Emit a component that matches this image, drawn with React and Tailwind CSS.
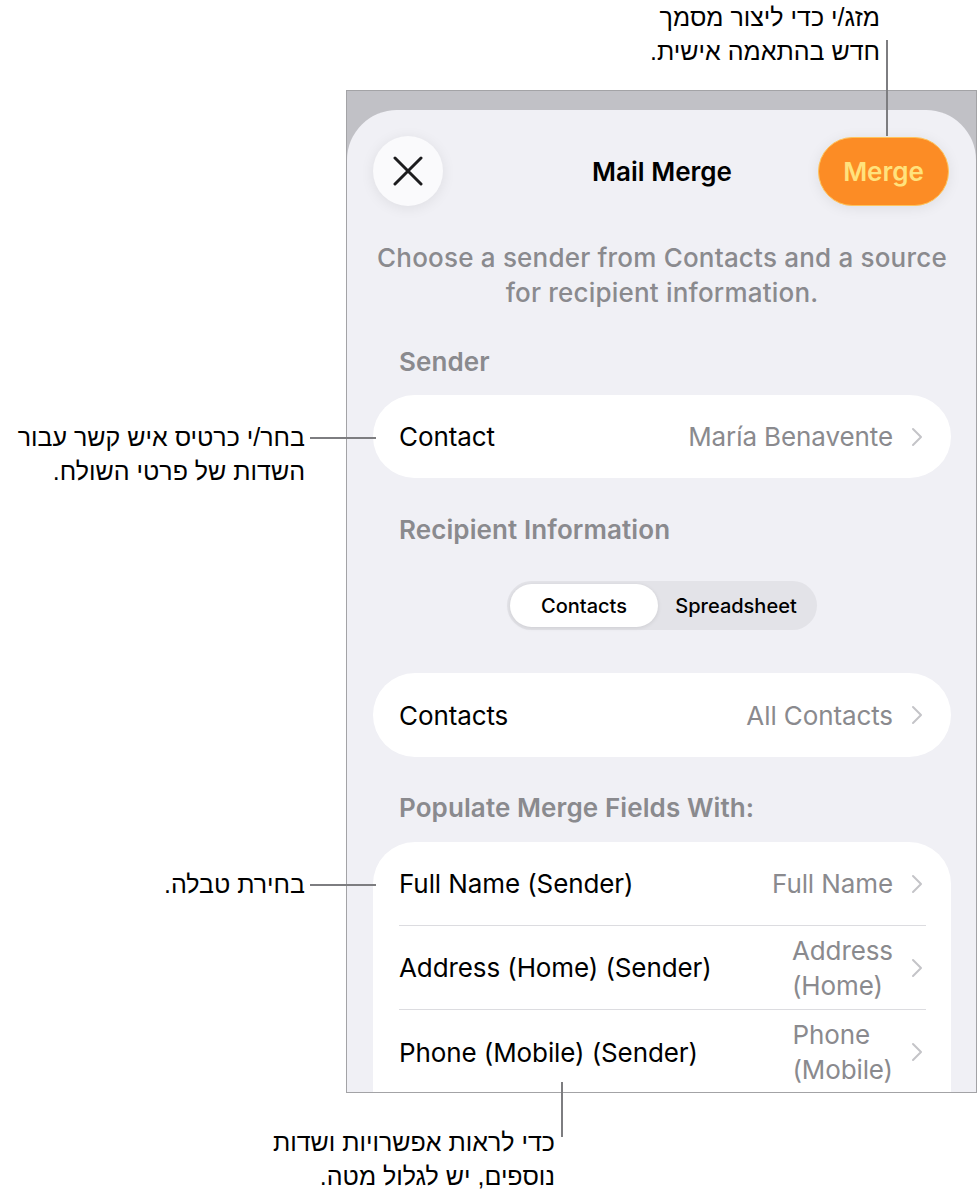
import React from 'react';

const ui = { fontFamily: 'Inter, Roboto, "Liberation Sans", sans-serif' };
const he = { fontFamily: '"Liberation Sans", "DejaVu Sans", sans-serif' };

const Chevron = () => (
  <svg width="12" height="20" viewBox="0 0 12 20" className="shrink-0">
    <path d="M2 2 L10 10 L2 18" fill="none" stroke="#c4c4c8" strokeWidth="2" strokeLinecap="round" strokeLinejoin="round" />
  </svg>
);

const Row = ({ label, value, divider }) => (
  <div className="h-[84px] flex flex-col">
    <div className="flex-1 flex items-center pl-[26px] pr-[28px]">
      <span className="text-[26px] text-black tracking-[-0.1px]">{label}</span>
      <div className="ml-auto flex items-center gap-[18px]">
        <div className="text-left text-[26px] leading-[35px] text-[#8a8a8e] tracking-[-0.1px]">
          {value.map((v) => (
            <div key={v}>{v}</div>
          ))}
        </div>
        <Chevron />
      </div>
    </div>
    {divider && <div className="ml-[26px] mr-[25px] h-px bg-[#dcdce0]" />}
  </div>
);

const SectionLabel = ({ children, className }) => (
  <div className={'pl-[26px] text-[26px] leading-[30px] font-semibold text-[#8a8a8e] tracking-[0.1px] ' + className}>
    {children}
  </div>
);

const Callout = ({ className, children }) => (
  <div className={'absolute text-[25px] leading-[34px] text-black text-right ' + className} dir="rtl" style={he}>
    {children}
  </div>
);

export default function App() {
  return (
    <div className="relative w-[977px] h-[1193px] bg-white overflow-hidden" style={ui}>
      {/* phone screenshot */}
      <div className="ml-[346px] mt-[90px] w-[631px] h-[1003px] border border-[#a3a3a6] bg-[#c1c1c6] overflow-hidden pt-[19px]">
        <div className="h-full bg-[#f0f0f5] rounded-t-[50px] pt-[26px] pl-[26px] pr-[25px]">
          <div className="h-[70px] grid grid-cols-[1fr_auto_1fr] items-center">
            <button className="w-[70px] h-[70px] rounded-full bg-[#fafafc] shadow-[0_2px_14px_rgba(0,0,0,0.08)] flex items-center justify-center">
              <svg width="30" height="30" viewBox="0 0 30 30">
                <path d="M2 2 L28 28 M28 2 L2 28" stroke="#1c1c1e" strokeWidth="3" strokeLinecap="round" />
              </svg>
            </button>
            <div className="text-[26px] font-semibold text-black">Mail Merge</div>
            <div className="flex justify-end">
              <button className="w-[131px] h-[69px] rounded-full bg-[#fc8c25] border border-[#ffc45a] shadow-[0_2px_14px_rgba(0,0,0,0.08)] text-[26px] font-semibold text-[#ffe27d] mr-[2px]">
                Merge
              </button>
            </div>
          </div>

          <div className="mt-[34px] text-center text-[26px] leading-[35px] font-medium text-[#8a8a8e] tracking-[0.2px]">
            Choose a sender from Contacts and a source
            <br />
            for recipient information.
          </div>

          <SectionLabel className="mt-[37px]">Sender</SectionLabel>
          <div className="mt-[18px] h-[83px] rounded-[42px] bg-white flex items-center pl-[26px] pr-[28px]">
            <span className="text-[26px] text-black tracking-[-0.1px]">Contact</span>
            <div className="ml-auto flex items-center gap-[18px]">
              <span className="text-[26px] text-[#8a8a8e] tracking-[-0.1px]">María Benavente</span>
              <Chevron />
            </div>
          </div>

          <SectionLabel className="mt-[37px]">Recipient Information</SectionLabel>
          <div className="mt-[36px] flex justify-center">
            <div className="w-[310px] h-[49px] rounded-full bg-[#e3e3e8] p-[3px] flex">
              <div className="w-[148px] rounded-full bg-white shadow-[0_1px_4px_rgba(0,0,0,0.1)] flex items-center justify-center text-[20px] font-medium text-black">
                Contacts
              </div>
              <div className="flex-1 flex items-center justify-center text-[20px] font-medium text-black">
                Spreadsheet
              </div>
            </div>
          </div>

          <div className="mt-[43px] h-[84px] rounded-[42px] bg-white flex items-center pl-[26px] pr-[28px]">
            <span className="text-[26px] text-black tracking-[-0.1px]">Contacts</span>
            <div className="ml-auto flex items-center gap-[18px]">
              <span className="text-[26px] text-[#8a8a8e] tracking-[-0.1px]">All Contacts</span>
              <Chevron />
            </div>
          </div>

          <SectionLabel className="mt-[36px]">Populate Merge Fields With:</SectionLabel>
          <div className="mt-[19px] rounded-t-[42px] bg-white">
            <Row label="Full Name (Sender)" value={['Full Name']} divider />
            <Row label="Address (Home) (Sender)" value={['Address', '(Home)']} divider />
            <Row label="Phone (Mobile) (Sender)" value={['Phone', '(Mobile)']} />
          </div>
        </div>
      </div>

      {/* callouts */}
      <Callout className="top-0 right-[97px]">
        מזג/י כדי ליצור מסמך
        <br />
        חדש בהתאמה אישית.
      </Callout>
      <div className="absolute left-[886px] top-[40px] w-[1.5px] h-[96px] bg-[#7d7d80]" />

      <Callout className="top-[420px] right-[672px]">
        בחר/י כרטיס איש קשר עבור
        <br />
        השדות של פרטי השולח.
      </Callout>
      <div className="absolute left-[310px] top-[437px] w-[66px] h-[1.5px] bg-[#7d7d80]" />

      <Callout className="top-[867px] right-[672px]">בחירת טבלה.</Callout>
      <div className="absolute left-[310px] top-[884px] w-[66px] h-[1.5px] bg-[#7d7d80]" />

      <div className="absolute left-[561px] top-[1082px] w-[1.5px] h-[55px] bg-[#7d7d80]" />
      <Callout className="top-[1125px] right-[422px]">
        כדי לראות אפשרויות ושדות
        <br />
        נוספים, יש לגלול מטה.
      </Callout>
    </div>
  );
}
